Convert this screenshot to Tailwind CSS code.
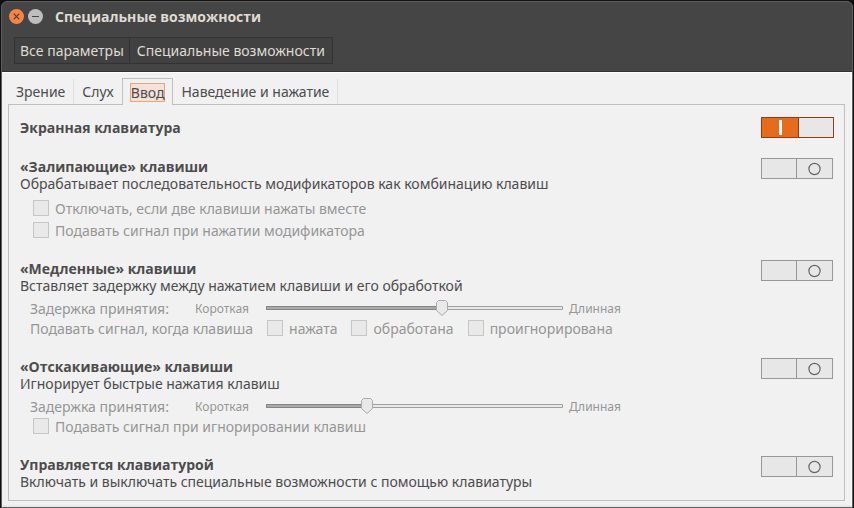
<!DOCTYPE html>
<html lang="ru">
<head>
<meta charset="utf-8">
<meta name="viewport" content="width=device-width, initial-scale=1">
<title>Специальные возможности</title>
<script src="https://cdn.jsdelivr.net/npm/@tailwindcss/browser@4"></script>
</head>
<body class="min-h-screen bg-[#101010] px-px pt-px flex flex-col text-[14px] leading-[17px] text-[#4c4c4c] font-['Noto_Sans','Open_Sans',sans-serif]">
<div class="grow flex flex-col rounded-t-md bg-[#454545] border border-[#5e5e5e] overflow-hidden">
  <header class="border-b border-[#333] text-[#dfdbd2]">
    <div class="flex items-center h-7 pl-[7px] gap-1">
      <button aria-label="Закрыть" class="size-[15px]"><svg class="block" viewBox="0 0 15 15" width="15" height="15"><circle cx="7.5" cy="7.5" r="7.5" fill="#f58449"/><path d="M4.7 4.7l5.6 5.6M10.3 4.7l-5.6 5.6" stroke="#5c3a26" stroke-width="1.2"/></svg></button>
      <button aria-label="Свернуть" class="size-[15px]"><svg class="block" viewBox="0 0 15 15" width="15" height="15"><circle cx="7.5" cy="7.5" r="7.5" fill="#bebebe"/><path d="M4 7.5h7" stroke="#454545" stroke-width="1.2"/></svg></button>
      <h1 class="ml-2 font-bold font-['Open_Sans','Noto_Sans',sans-serif]">Специальные возможности</h1>
    </div>
    <nav class="flex pl-3 pt-[7px] pb-[7px]">
      <button class="h-[27px] px-[5px] bg-[#414141] border border-r-0 border-[#333]">Все параметры</button>
      <button class="h-[27px] px-[7px] bg-[#414141] border border-[#333]">Специальные возможности</button>
    </nav>
  </header>
  <main class="grow flex flex-col bg-[#f1f1f1] border-t border-r border-white border-b-2 border-b-[#e8e8e8] pl-1.5 pr-1.5 pt-[5px] pb-1">
    <div role="tablist" class="relative z-10 flex items-end -mb-px">
      <button role="tab" class="h-[25px] mb-px px-2 border-r border-[#e0e0e0]">Зрение</button>
      <button role="tab" class="h-[25px] mb-px px-2">Слух</button>
      <button role="tab" aria-selected="true" class="h-[27px] px-[7px] bg-[#f1f1f1] border border-b-0 border-[#bfbfbf]"><span class="block h-[19px] bg-[#f4e2d8] border border-[#f0a47c]">Ввод</span></button>
      <button role="tab" class="h-[25px] mb-px px-2 border-r border-[#e0e0e0]">Наведение и нажатие</button>
    </div>
    <div role="tabpanel" class="grow flex flex-col gap-5 border border-[#bfbfbf] pl-[11px] pr-2.5 pt-3 pb-2">
      <section class="flex justify-between items-center">
        <h2 class="font-bold font-['Open_Sans','Noto_Sans',sans-serif]">Экранная клавиатура</h2>
        <button role="switch" aria-checked="true" aria-label="Экранная клавиатура" class="flex w-[73px] h-[21px] border border-[#8f3e14] bg-[#e7e7e7]"><span class="flex items-center justify-center w-[37px] h-full bg-[#e66c1c] border-r border-[#8f3e14]"><span class="w-[3px] h-[15px] bg-white"></span></span></button>
      </section>
      <section class="flex justify-between items-start">
        <div>
          <h2 class="font-bold font-['Open_Sans','Noto_Sans',sans-serif]">«Залипающие» клавиши</h2>
          <p>Обрабатывает последовательность модификаторов как комбинацию клавиш</p>
          <div class="mt-1.5 pl-[13px] flex flex-col gap-0.5 text-[#969696]">
            <label class="flex items-center gap-1.5 h-5"><input type="checkbox" disabled class="appearance-none size-4 border border-[#c6c6c6] bg-[#e9e9e9]">Отключать, если две клавиши нажаты вместе</label>
            <label class="flex items-center gap-1.5 h-5"><input type="checkbox" disabled class="appearance-none size-4 border border-[#c6c6c6] bg-[#e9e9e9]">Подавать сигнал при нажатии модификатора</label>
          </div>
        </div>
        <button role="switch" aria-checked="false" aria-label="«Залипающие» клавиши" class="flex mr-px w-[72px] h-[21px] border border-[#979797] bg-[#e7e7e7]"><span class="w-[35px] h-full border-r border-[#979797]"></span><svg class="grow h-full" viewBox="0 0 35 19"><circle cx="17.5" cy="10" r="5.6" fill="none" stroke="#666" stroke-width="1.2"/></svg></button>
      </section>
      <section class="flex justify-between items-start">
        <div>
          <h2 class="font-bold font-['Open_Sans','Noto_Sans',sans-serif]">«Медленные» клавиши</h2>
          <p>Вставляет задержку между нажатием клавиши и его обработкой</p>
          <div class="mt-1 pl-2.5 text-[#969696]">
            <div class="flex items-center h-5">
              <label for="slow" class="w-[165px]">Задержка принятия:</label>
              <span class="w-[70px] text-[12px]">Короткая</span>
              <span class="relative flex items-center w-[299px] h-4">
                <input id="slow" type="range" disabled value="60" class="appearance-none w-full h-4 opacity-0">
                <svg class="absolute inset-0 pointer-events-none" width="299" height="16" viewBox="0 0 299 16"><path d="M1.5 6.5h296v3h-296z" fill="#e9e9e9" stroke="#a0a0a0"/><path d="M1.5 6.5h172v3h-172z" fill="#aaa" stroke="#858585"/><path d="M173.500 .5h7l2 2v8l-5.500 5-5.500-5v-8z" fill="#e9e9e9" stroke="#aaa"/></svg>
              </span>
              <span class="ml-[5px] text-[12px]">Длинная</span>
            </div>
            <fieldset class="flex items-center h-5 gap-[14px]">
              <span>Подавать сигнал, когда клавиша</span>
              <label class="flex items-center gap-1.5"><input type="checkbox" disabled class="appearance-none size-4 border border-[#c6c6c6] bg-[#e9e9e9]">нажата</label>
              <label class="flex items-center gap-1.5"><input type="checkbox" disabled class="appearance-none size-4 border border-[#c6c6c6] bg-[#e9e9e9]">обработана</label>
              <label class="flex items-center gap-1.5"><input type="checkbox" disabled class="appearance-none size-4 border border-[#c6c6c6] bg-[#e9e9e9]">проигнорирована</label>
            </fieldset>
          </div>
        </div>
        <button role="switch" aria-checked="false" aria-label="«Медленные» клавиши" class="flex mr-px w-[72px] h-[21px] border border-[#979797] bg-[#e7e7e7]"><span class="w-[35px] h-full border-r border-[#979797]"></span><svg class="grow h-full" viewBox="0 0 35 19"><circle cx="17.5" cy="10" r="5.6" fill="none" stroke="#666" stroke-width="1.2"/></svg></button>
      </section>
      <section class="flex justify-between items-start">
        <div>
          <h2 class="font-bold font-['Open_Sans','Noto_Sans',sans-serif]">«Отскакивающие» клавиши</h2>
          <p>Игнорирует быстрые нажатия клавиш</p>
          <div class="mt-1 pl-2.5 text-[#969696]">
            <div class="flex items-center h-5">
              <label for="bounce" class="w-[165px]">Задержка принятия:</label>
              <span class="w-[70px] text-[12px]">Короткая</span>
              <span class="relative flex items-center w-[299px] h-4">
                <input id="bounce" type="range" disabled value="33" class="appearance-none w-full h-4 opacity-0">
                <svg class="absolute inset-0 pointer-events-none" width="299" height="16" viewBox="0 0 299 16"><path d="M1.5 6.5h296v3h-296z" fill="#e9e9e9" stroke="#a0a0a0"/><path d="M1.5 6.5h97v3h-97z" fill="#aaa" stroke="#858585"/><path d="M98.500 .5h7l2 2v8l-5.500 5-5.500-5v-8z" fill="#e9e9e9" stroke="#aaa"/></svg>
              </span>
              <span class="ml-[5px] text-[12px]">Длинная</span>
            </div>
            <label class="flex items-center gap-1.5 h-5 pl-[3px]"><input type="checkbox" disabled class="appearance-none size-4 border border-[#c6c6c6] bg-[#e9e9e9]">Подавать сигнал при игнорировании клавиш</label>
          </div>
        </div>
        <button role="switch" aria-checked="false" aria-label="«Отскакивающие» клавиши" class="flex mr-px w-[72px] h-[21px] border border-[#979797] bg-[#e7e7e7]"><span class="w-[35px] h-full border-r border-[#979797]"></span><svg class="grow h-full" viewBox="0 0 35 19"><circle cx="17.5" cy="10" r="5.6" fill="none" stroke="#666" stroke-width="1.2"/></svg></button>
      </section>
      <section class="flex justify-between items-start">
        <div>
          <h2 class="font-bold font-['Open_Sans','Noto_Sans',sans-serif]">Управляется клавиатурой</h2>
          <p>Включать и выключать специальные возможности с помощью клавиатуры</p>
        </div>
        <button role="switch" aria-checked="false" aria-label="Управляется клавиатурой" class="flex mr-px w-[72px] h-[21px] border border-[#979797] bg-[#e7e7e7]"><span class="w-[35px] h-full border-r border-[#979797]"></span><svg class="grow h-full" viewBox="0 0 35 19"><circle cx="17.5" cy="10" r="5.6" fill="none" stroke="#666" stroke-width="1.2"/></svg></button>
      </section>
    </div>
  </main>
</div>
</body>
</html>
